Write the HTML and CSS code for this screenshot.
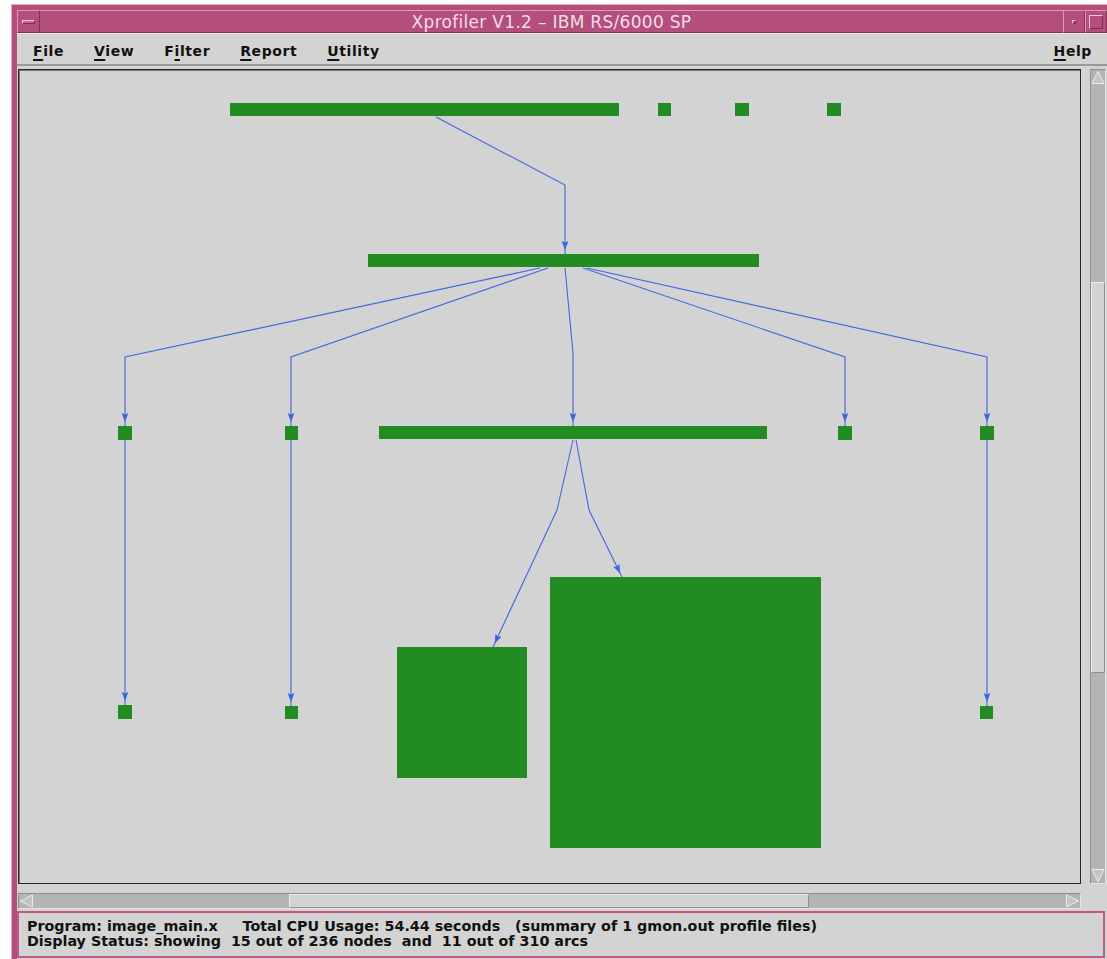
FILE: index.html
```html
<!DOCTYPE html>
<html lang="en">
<head>
<meta charset="utf-8">
<title>Xprofiler V1.2 – IBM RS/6000 SP</title>
<link rel="stylesheet" href="styles.css">
</head>
<body>
<div class="frame">
  <div class="titlebar">
    <div class="tbtn"><span class="menu-glyph"></span></div>
    <div class="title">Xprofiler V1.2 – IBM RS/6000 SP</div>
    <div class="tbtn"><span class="min-glyph"></span></div>
    <div class="tbtn"><span class="max-glyph"></span></div>
  </div>

  <div class="client">
    <div class="menubar">
      <span class="menu"><u>F</u>ile</span>
      <span class="menu"><u>V</u>iew</span>
      <span class="menu">F<u>i</u>lter</span>
      <span class="menu"><u>R</u>eport</span>
      <span class="menu"><u>U</u>tility</span>
      <span class="menu help"><u>H</u>elp</span>
    </div>

    <div class="work">
      <div class="canvas">
        <svg class="graph" width="1061" height="813" viewBox="19 70 1061 813">
          <defs>
            <marker id="head" markerUnits="userSpaceOnUse" markerWidth="10" markerHeight="8"
                    refX="13" refY="4" orient="auto" overflow="visible">
              <path d="M0,0.6 L9,4 L0,7.4 L1.5,4 z" fill="#3d63e6"/>
            </marker>
          </defs>

          <!-- call arcs -->
          <g class="arcs" fill="none" stroke="#4169e1" stroke-width="1.1">
            <polyline points="436,117 565,185 565,254" marker-end="url(#head)"/>
            <polyline points="540,268 125,357 125,426" marker-end="url(#head)"/>
            <polyline points="548,268 291,357 291,426" marker-end="url(#head)"/>
            <polyline points="565,268 573,353 573,426" marker-end="url(#head)"/>
            <polyline points="583,268 845,357 845,426" marker-end="url(#head)"/>
            <polyline points="587,268 987,357 987,426" marker-end="url(#head)"/>
            <polyline points="125,440 125,705" marker-end="url(#head)"/>
            <polyline points="291,440 291,706" marker-end="url(#head)"/>
            <polyline points="987,440 987,706" marker-end="url(#head)"/>
            <polyline points="573,440 557,510 493,647" marker-end="url(#head)"/>
            <polyline points="576,440 589,510 622,577" marker-end="url(#head)"/>
          </g>

          <!-- function nodes -->
          <g class="nodes" fill="#228b22">
            <rect x="230" y="103" width="389" height="13"/>
            <rect x="658" y="103" width="13" height="13"/>
            <rect x="735" y="103" width="14" height="13"/>
            <rect x="827" y="103" width="14" height="13"/>

            <rect x="368" y="254" width="391" height="13"/>

            <rect x="118" y="426" width="14" height="14"/>
            <rect x="285" y="426" width="13" height="14"/>
            <rect x="379" y="426" width="388" height="13"/>
            <rect x="838" y="426" width="14" height="14"/>
            <rect x="980" y="426" width="14" height="14"/>

            <rect x="118" y="705" width="14" height="14"/>
            <rect x="285" y="706" width="13" height="13"/>
            <rect x="980" y="706" width="13" height="13"/>

            <rect x="397" y="647" width="130" height="131"/>
            <rect x="550" y="577" width="271" height="271"/>
          </g>
        </svg>
      </div>

      <div class="vscroll">
        <svg class="arrow" width="14" height="15" viewBox="0 0 14 15"><polygon points="7,1.5 13,13.5 1,13.5" fill="#c4c4c4" stroke="#ececec" stroke-width="1"/></svg>
        <div class="thumb vthumb"></div>
        <div class="fill"></div>
        <svg class="arrow" width="14" height="15" viewBox="0 0 14 15"><polygon points="1,1.5 13,1.5 7,13.5" fill="#c4c4c4" stroke="#ececec" stroke-width="1"/></svg>
      </div>

      <div class="hscroll">
        <svg class="arrow" width="15" height="14" viewBox="0 0 15 14"><polygon points="1.5,7 13.5,1 13.5,13" fill="#c4c4c4" stroke="#ececec" stroke-width="1"/></svg>
        <div class="thumb hthumb"></div>
        <div class="fill"></div>
        <svg class="arrow" width="15" height="14" viewBox="0 0 15 14"><polygon points="1.5,1 13.5,7 1.5,13" fill="#c4c4c4" stroke="#ececec" stroke-width="1"/></svg>
      </div>
    </div>

    <div class="status">
      <div class="line">Program: image_main.x     Total CPU Usage: 54.44 seconds   (summary of 1 gmon.out profile files)</div>
      <div class="line">Display Status: showing  15 out of 236 nodes  and  11 out of 310 arcs</div>
    </div>
  </div>
</div>
</body>
</html>
```

FILE: styles.css
```css
html, body {
  margin: 0;
  padding: 0;
  background: #ffffff;
}

body {
  font-family: "DejaVu Sans", "Liberation Sans", sans-serif;
}

/* window manager frame */
.frame {
  box-sizing: border-box;
  width: 1096px;
  height: 955px;
  margin: 4px 0 0 11px;
  padding: 5px 0 0 5px;
  background: #b44f7c;
  border-top: 1px solid #e6a9c5;
  border-left: 1px solid #e6a9c5;
  display: flex;
  flex-direction: column;
}

.titlebar {
  height: 23px;
  display: flex;
  align-items: stretch;
  flex: none;
}

.tbtn {
  box-sizing: border-box;
  width: 22px;
  flex: none;
  border-left: 1px solid #dd98b8;
  border-top: 1px solid #dd98b8;
  border-right: 1px solid #803456;
  border-bottom: 1px solid #803456;
  display: flex;
  align-items: center;
  justify-content: center;
}

.tbtn:first-child {
  width: 23px;
}

.menu-glyph {
  width: 11px;
  height: 2px;
  border: 1px solid #f0c8da;
  border-bottom-color: #7a3050;
  border-right-color: #7a3050;
  background: #c56790;
}

.min-glyph {
  width: 2px;
  height: 2px;
  border: 1px solid #f0c8da;
  border-bottom-color: #7a3050;
  border-right-color: #7a3050;
}

.max-glyph {
  width: 14px;
  height: 14px;
  box-sizing: border-box;
  border: 1px solid #f0c8da;
  border-bottom-color: #7a3050;
  border-right-color: #7a3050;
}

.title {
  flex: 1;
  text-align: center;
  color: #f3dde8;
  font-size: 17px;
  letter-spacing: 0.3px;
  line-height: 22px;
  border-top: 1px solid #dd98b8;
  border-bottom: 1px solid #803456;
  box-sizing: border-box;
}

/* application client area */
.client {
  flex: 1;
  background: #d3d3d3;
  display: flex;
  flex-direction: column;
  min-height: 0;
}

.menubar {
  box-sizing: border-box;
  height: 33px;
  flex: none;
  display: flex;
  align-items: center;
  gap: 30px;
  padding: 3px 15px 0 16px;
  border-top: 1px solid #ececec;
  border-bottom: 2px solid #9a9a9a;
}

.menu {
  font-size: 14px;
  font-weight: bold;
  color: #111111;
  letter-spacing: 0.6px;
}

.menu u {
  text-decoration-thickness: 2px;
  text-underline-offset: 3px;
}

.help {
  margin-left: auto;
}

.work {
  flex: none;
  height: 845px;
  box-sizing: border-box;
  padding: 3px 1px 0 1px;
  display: grid;
  grid-template-columns: 1063px 16px;
  grid-template-rows: 815px 16px;
  column-gap: 9px;
  row-gap: 9px;
}

.canvas {
  box-sizing: border-box;
  border: 1px solid #262626;
  box-shadow: inset 1px 1px 0 #7a7a7a;
  background: #d3d3d3;
  overflow: hidden;
}

.graph {
  display: block;
}

.graph .nodes rect {
  shape-rendering: crispEdges;
}

/* scrollbars */
.vscroll,
.hscroll {
  box-sizing: border-box;
  background: #b4b4b4;
  border-top: 1px solid #8f8f8f;
  border-left: 1px solid #8f8f8f;
  border-right: 1px solid #e4e4e4;
  border-bottom: 1px solid #e4e4e4;
  display: flex;
}

.vscroll {
  flex-direction: column;
  align-items: center;
}

.hscroll {
  flex-direction: row;
  align-items: center;
}

.arrow {
  display: block;
  flex: none;
}

.fill {
  flex: 1;
}

.thumb {
  box-sizing: border-box;
  background: #d3d3d3;
  border-top: 1px solid #ececec;
  border-left: 1px solid #ececec;
  border-right: 1px solid #8f8f8f;
  border-bottom: 1px solid #8f8f8f;
  flex: none;
}

.vthumb {
  width: 14px;
  height: 391px;
  margin-top: 197px;
}

.hthumb {
  height: 14px;
  width: 520px;
  margin-left: 255px;
}

/* status area */
.status {
  box-sizing: border-box;
  height: 47px;
  flex: none;
  margin-right: 2px;
  border: 2px solid #c4578a;
  padding: 6px 0 0 8px;
}

.line {
  white-space: pre;
  font-size: 14.3px;
  font-weight: bold;
  line-height: 15px;
  color: #111111;
}
```
